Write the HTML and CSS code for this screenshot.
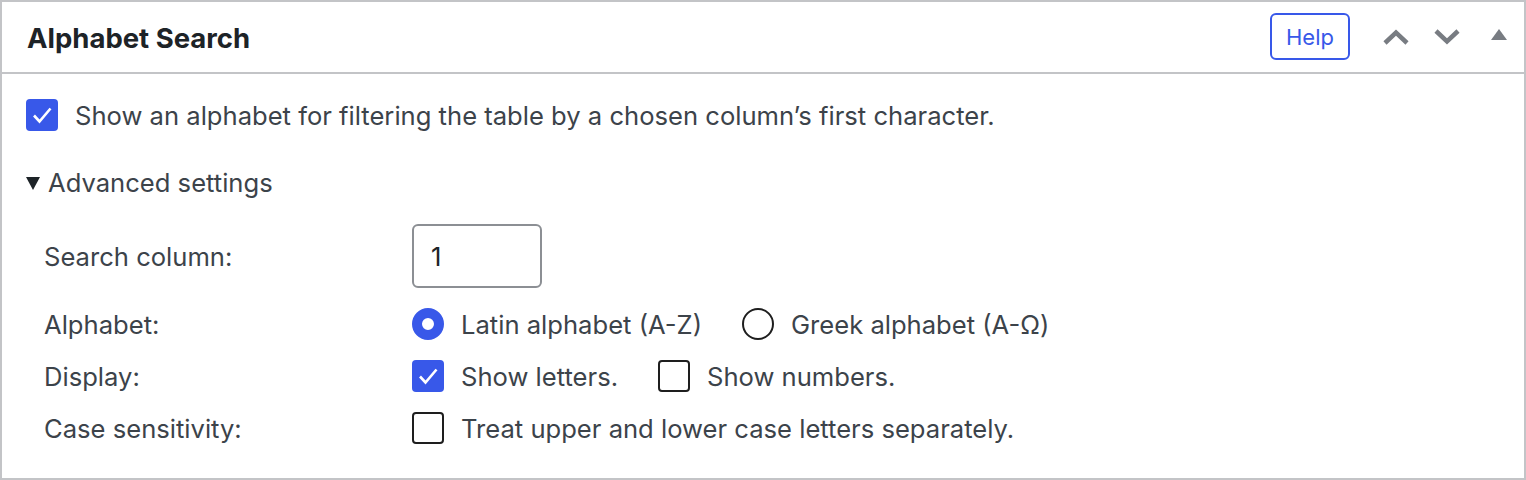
FILE: index.html
```html
<!DOCTYPE html>
<html lang="en">
<head>
<meta charset="utf-8">
<title>Alphabet Search</title>
<link rel="stylesheet" href="styles.css">
</head>
<body>
<div class="postbox">
  <div class="postbox-header">
    <h2 class="title">Alphabet Search</h2>
    <div class="actions">
      <button class="help" type="button">Help</button>
      <span class="icon-btn">
        <svg width="26" height="16" viewBox="0 0 26 16"><path d="M2 14 L13 3.5 L24 14" fill="none" stroke="#787c82" stroke-width="4.5"/></svg>
      </span>
      <span class="icon-btn">
        <svg width="26" height="16" viewBox="0 0 26 16"><path d="M2 2 L13 12.5 L24 2" fill="none" stroke="#787c82" stroke-width="4.5"/></svg>
      </span>
      <span class="icon-btn tri-btn">
        <svg width="16" height="12" viewBox="0 0 16 12"><path d="M8 0 L16 11 L0 11 Z" fill="#787c82"/></svg>
      </span>
    </div>
  </div>
  <div class="inside">
    <label class="main-option">
      <span class="cb checked">
        <svg width="32" height="32" viewBox="0 0 32 32"><path d="M8 16.5 L13.5 22.5 L24.5 9.5" fill="none" stroke="#fff" stroke-width="2.6"/></svg>
      </span>
      <span>Show an alphabet for filtering the table by a chosen column’s first character.</span>
    </label>
    <div class="advanced">
      <div class="summary"><span class="disclosure"></span>Advanced settings</div>
      <div class="settings">
        <div class="label">Search column:</div>
        <div class="control"><span class="num-input">1</span></div>

        <div class="label">Alphabet:</div>
        <div class="control">
          <span class="option"><span class="radio checked"></span>Latin alphabet (A-Z)</span>
          <span class="option"><span class="radio"></span>Greek alphabet (A-Ω)</span>
        </div>

        <div class="label">Display:</div>
        <div class="control">
          <span class="option"><span class="cb checked"><svg width="32" height="32" viewBox="0 0 32 32"><path d="M8 16.5 L13.5 22.5 L24.5 9.5" fill="none" stroke="#fff" stroke-width="2.6"/></svg></span>Show letters.</span>
          <span class="option"><span class="cb"></span>Show numbers.</span>
        </div>

        <div class="label">Case sensitivity:</div>
        <div class="control">
          <span class="option"><span class="cb"></span>Treat upper and lower case letters separately.</span>
        </div>
      </div>
    </div>
  </div>
</div>
</body>
</html>
```
FILE: styles.css
```css
* { box-sizing: border-box; }
html, body { margin: 0; padding: 0; background: #fff; }
body {
  font-family: Inter, "Noto Sans", "Liberation Sans", sans-serif;
  color: #3c434a;
  font-size: 25.6px;
}
.postbox {
  width: 1526px;
  height: 480px;
  border: 2px solid #c3c4c7;
  background: #fff;
}
.postbox-header {
  height: 72px;
  border-bottom: 2px solid #c3c4c7;
  display: flex;
  align-items: center;
  justify-content: space-between;
  padding: 0 0 0 25px;
}
.title {
  margin: 2px 0 0 0;
  font-size: 27.5px;
  font-weight: 700;
  color: #1d2327;
}
.actions {
  display: flex;
  align-items: center;
  height: 100%;
}
.help {
  width: 80px;
  height: 47px;
  border: 2px solid #3858e9;
  border-radius: 6px;
  background: #fff;
  color: #3858e9;
  font-family: inherit;
  font-size: 22px;
  padding: 0;
  margin-right: 33px;
  margin-top: -1px;
}
.icon-btn {
  width: 26px;
  display: flex;
  align-items: center;
  justify-content: center;
  margin-right: 25px;
}
.icon-btn.tri-btn {
  width: 16px;
  margin-left: 6px;
  margin-right: 17px;
  margin-top: -5px;
}
.inside {
  padding: 25px 0 0 24px;
}
.main-option {
  display: flex;
  align-items: center;
  height: 32px;
  gap: 17px;
}
.cb {
  flex: none;
  width: 32px;
  height: 32px;
  border: 2px solid #1e1e1e;
  border-radius: 4px;
  display: inline-flex;
  background: #fff;
}
.cb.checked {
  border: none;
  background: #3858e9;
}
.cb svg { display: block; }
.advanced { margin-top: 35px; }
.summary {
  display: flex;
  align-items: center;
  height: 32px;
  color: #3c434a;
}
.disclosure {
  width: 0;
  height: 0;
  border-left: 7px solid transparent;
  border-right: 7px solid transparent;
  border-top: 13px solid #1d2327;
  margin: 2px 8px 0 0;
}
.settings {
  margin-top: 26px;
  display: grid;
  grid-template-columns: 368px 1fr;
  grid-auto-rows: 32px;
  grid-template-rows: 64px;
  row-gap: 20px;
  padding-left: 18px;
}
.label, .control {
  display: flex;
  align-items: center;
}
.num-input {
  width: 130px;
  height: 64px;
  border: 2px solid #8c8f94;
  border-radius: 6px;
  display: flex;
  align-items: center;
  padding-left: 17px;
  color: #1d2327;
}
.option {
  display: inline-flex;
  align-items: center;
  gap: 17px;
  margin-right: 40px;
}
.radio {
  flex: none;
  width: 32px;
  height: 32px;
  border-radius: 50%;
  border: 2px solid #1e1e1e;
  background: #fff;
}
.radio.checked {
  border: 10px solid #3858e9;
}
```
